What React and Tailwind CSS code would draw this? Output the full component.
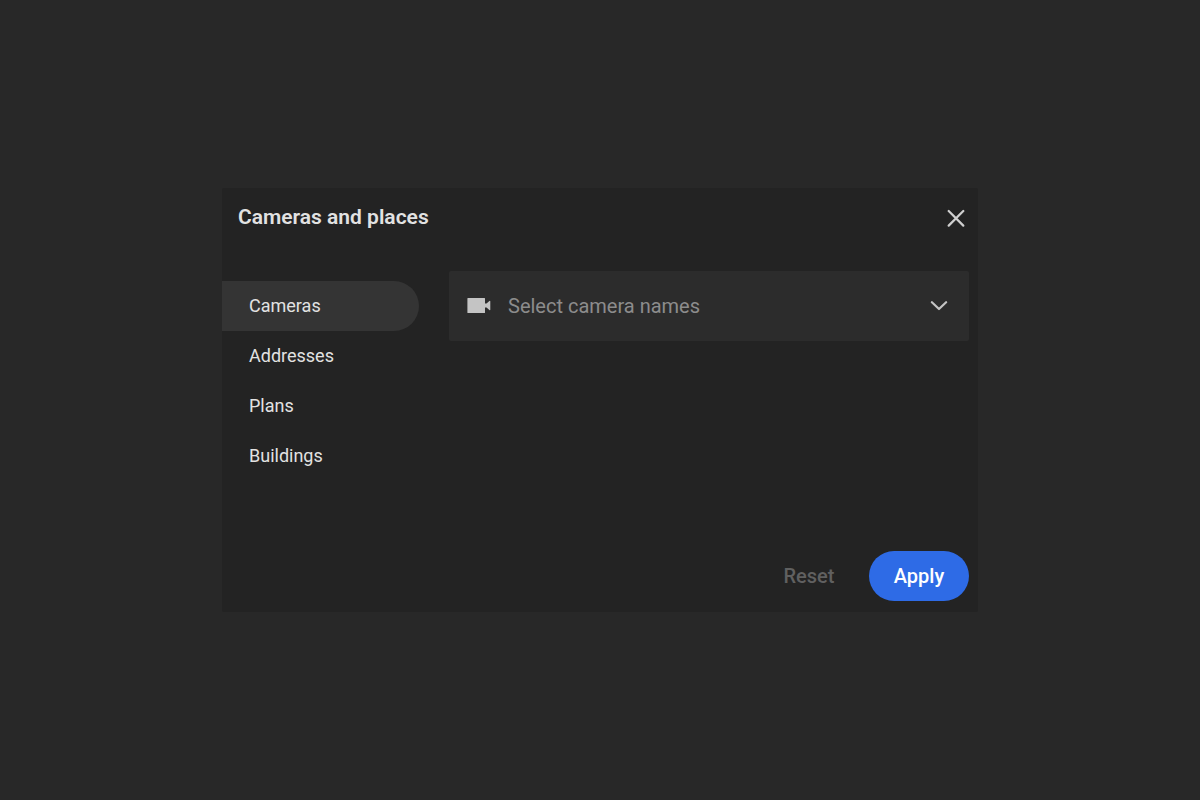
import React, { useState } from 'react';

const sections = [
  { id: 'cameras', label: 'Cameras', placeholder: 'Select camera names' },
  { id: 'addresses', label: 'Addresses', placeholder: 'Select addresses' },
  { id: 'plans', label: 'Plans', placeholder: 'Select plans' },
  { id: 'buildings', label: 'Buildings', placeholder: 'Select buildings' },
];

function CloseIcon() {
  return (
    <svg width="18" height="18" viewBox="0 0 18 18" fill="none" stroke="currentColor" strokeWidth="2.2" strokeLinecap="round" aria-hidden="true">
      <path d="M1.7 2L16.3 16.6M16.3 2L1.7 16.6" />
    </svg>
  );
}

function CameraIcon() {
  return (
    <svg width="24" height="16" viewBox="0 0 24 16" fill="currentColor" aria-hidden="true">
      <path d="M0.9 0H17.5Q18 0 18 0.5V5.5L19.5 5.5L22.4 3Q23.3 2.4 23.3 3.4V11.6Q23.3 12.6 22.4 12L19.5 9.5H18V14.5Q18 15 17.5 15H0.9Q0.4 15 0.4 14.5V0.5Q0.4 0 0.9 0Z" />
    </svg>
  );
}

function ChevronIcon() {
  return (
    <svg width="18" height="10" viewBox="0 0 18 10" fill="none" stroke="currentColor" strokeWidth="2.2" strokeLinecap="round" strokeLinejoin="round" aria-hidden="true">
      <path d="M1.9 1.2L9 8L16.1 1.2" />
    </svg>
  );
}

export default function App() {
  const [active, setActive] = useState('cameras');
  const [value, setValue] = useState('');

  const current = sections.find((s) => s.id === active);

  const openSection = (id) => { setActive(id); setValue(''); };

  return (
    <div className="flex min-h-screen items-center justify-center bg-[#282828] font-['Roboto',sans-serif] text-[#e2e2e2]">
      <section className="w-full max-w-[756px] rounded-xs bg-[#232323] pb-[11px]" aria-labelledby="dialog-title">
        <header className="flex h-15 items-center justify-between pr-[13px] pl-4">
          <h2 id="dialog-title" className="text-[21px] font-semibold">Cameras and places</h2>
          <button type="button" aria-label="Close" className="text-[#cfcfcf]">
            <CloseIcon />
          </button>
        </header>

        <div className="mt-[23px] flex items-start gap-[30px] pr-[9px]">
          <nav className="w-[197px] shrink-0 pt-[10px]">
            {sections.map((s) => (
              <button
                key={s.id}
                type="button"
                onClick={() => openSection(s.id)}
                className={`block h-[50px] w-full rounded-r-full pl-[27px] text-left text-lg ${s.id === active ? 'bg-[#343434]' : ''}`}
              >
                {s.label}
              </button>
            ))}
          </nav>

          <div className="relative min-w-0 flex-1 text-[#c4c4c4]">
            <select
              aria-label={current.label}
              value={value}
              onChange={(e) => setValue(e.target.value)}
              className="block h-[70px] w-full appearance-none rounded-xs bg-[#2c2c2c] pr-12 pl-[59px] text-xl text-[#8c8c8c]"
            >
              <option value="">{current.placeholder}</option>
            </select>
            <span className="pointer-events-none absolute inset-y-0 left-[18px] flex items-center">
              <CameraIcon />
            </span>
            <span className="pointer-events-none absolute inset-y-0 right-[21px] flex items-center">
              <ChevronIcon />
            </span>
          </div>
        </div>

        <footer className="mt-[70px] flex justify-end gap-[10px] pr-[9px]">
          <button type="button" onClick={() => setValue('')} className="h-[50px] w-[100px] rounded-full text-xl font-medium text-[#606060]">Reset</button>
          <button type="button" className="h-[50px] w-[100px] rounded-full bg-[#2e6be6] text-xl font-medium text-white">Apply</button>
        </footer>
      </section>
    </div>
  );
}
